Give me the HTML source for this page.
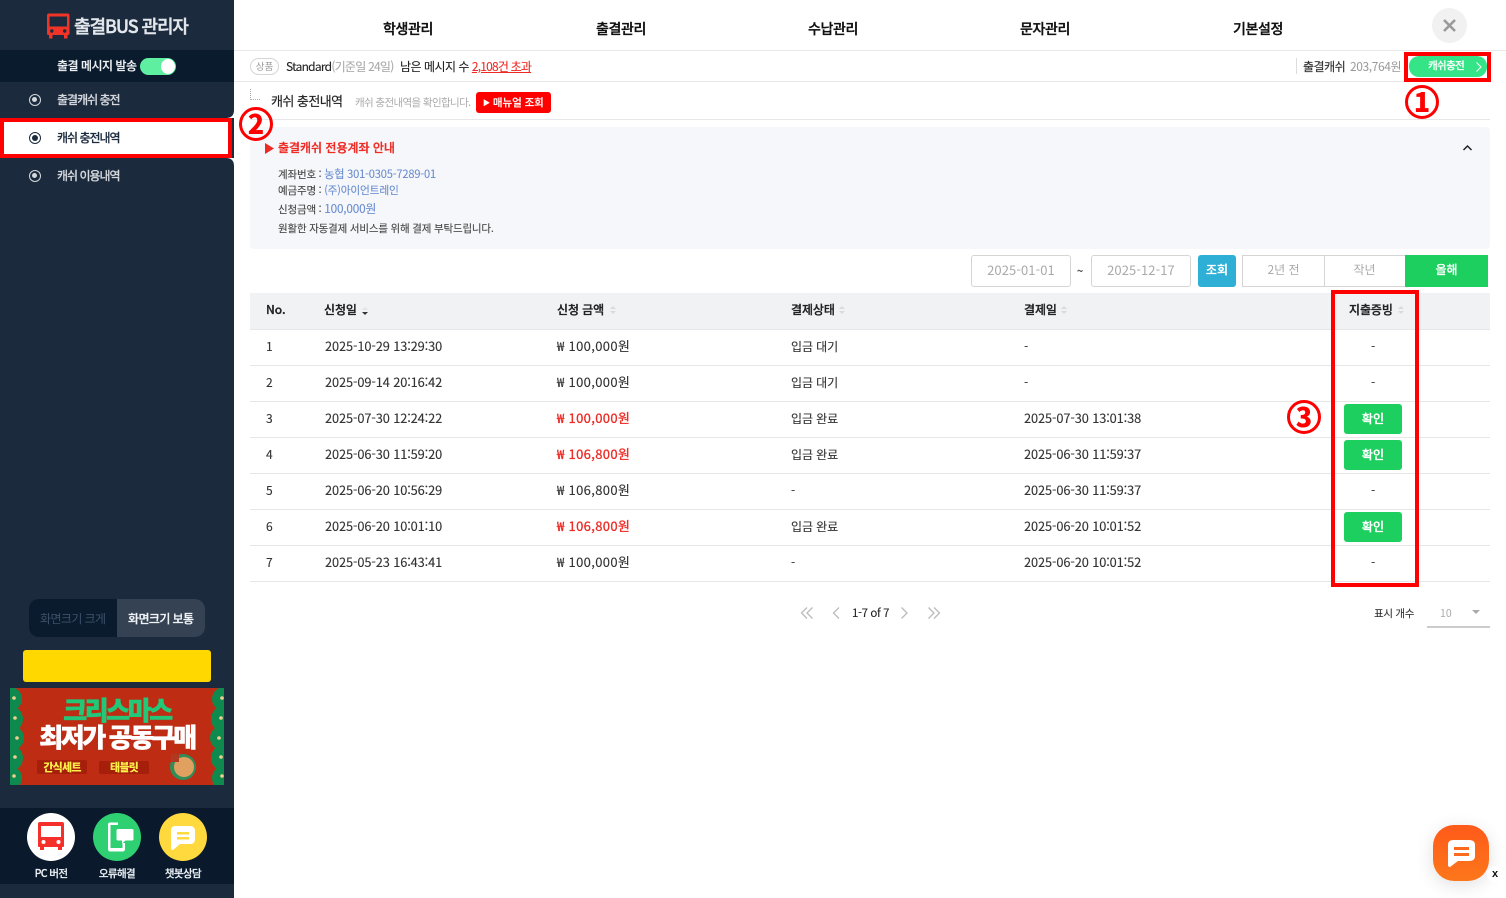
<!DOCTYPE html>
<html lang="ko"><head><meta charset="utf-8"><title>출결BUS 관리자</title>
<style>
*{box-sizing:border-box}
html,body{margin:0;padding:0;width:1506px;height:898px;overflow:hidden;background:#fff}
body{font-family:"Noto Sans CJK KR","Liberation Sans",sans-serif;color:#222;position:relative;font-feature-settings:"calt" 0;font-variant-ligatures:no-contextual}
.a,.t{position:absolute}
.t{white-space:nowrap;line-height:20px;height:20px}
.side{left:0;top:0;width:234px;height:898px;background:#1b2a3d}
.nav{font-size:14px;font-weight:500;color:#111;letter-spacing:-.35px;top:19px;transform:translateX(-50%);-webkit-text-stroke:.35px #111}
.radio{width:12px;height:12px;border-radius:50%;border:1.5px solid #d5d9de}
.radio:after{content:"";position:absolute;left:2px;top:2px;width:5px;height:5px;border-radius:50%;background:#d5d9de}
.m{font-size:12px;color:#d5d9de;letter-spacing:-1px;font-weight:500;-webkit-text-stroke:.15px}
.hl{position:absolute;left:250px;width:1240px;height:1px;background:#e6e7e9}
.th{font-size:12px;font-weight:500;color:#222;letter-spacing:-.1px;top:300px;-webkit-text-stroke:.3px #222}
.td{font-size:12px;color:#333;letter-spacing:-.1px;margin-top:1px;-webkit-text-stroke:.12px}
.d{font-size:12.800px;letter-spacing:-.1px;margin-top:0}
.w{font-size:13px;letter-spacing:.35px;margin-top:0}
.r{color:#ee2a24;font-weight:400;-webkit-text-stroke:.3px #ee2a24}
.btn{position:absolute;left:1344px;width:58px;height:30px;background:#1ccf5f;border-radius:3px;color:#fff;font-size:12px;font-weight:500;text-align:center;line-height:29px;letter-spacing:.1px;-webkit-text-stroke:.3px #fff}
.sort{position:absolute;width:6px;height:10px}
.num{position:absolute;width:34px;height:34px;border:3.500px solid #f00;border-radius:50%;color:#f00;font:900 27px/25px "Noto Sans CJK KR",sans-serif;text-align:center}
.date{position:absolute;top:255px;height:32px;width:100px;border:1px solid #d5d5d5;border-radius:3px;text-align:center;font-size:13px;color:#aaa;line-height:27px;letter-spacing:.1px}
.ic{font-size:10.500px;color:#eaf0f5;font-weight:500;letter-spacing:-.6px;transform:translateX(-50%);-webkit-text-stroke:.2px}
.n{font-size:10.500px;color:#444;letter-spacing:-.18px;-webkit-text-stroke:.1px}
</style></head><body>

<div class="a side"></div>
<svg class="a" style="left:46px;top:13px" width="24" height="26" viewBox="0 0 24 26"><path d="M1 2.500Q1 0.500 3 0.500H21.500Q23.500 0.500 23.500 2.500V20.500Q23.500 22 22 22H2.500Q1 22 1 20.500Z" fill="#f03528"/><rect x="3.500" y="3.500" width="17.500" height="10" fill="#1b2a3d"/><circle cx="5.800" cy="18" r="1.700" fill="#1b2a3d"/><circle cx="18.700" cy="18" r="1.700" fill="#1b2a3d"/><rect x="3" y="21" width="3.500" height="4.500" fill="#f03528"/><rect x="18" y="21" width="3.500" height="4.500" fill="#f03528"/></svg>
<div class="t" style="left:74px;top:16px;font-size:18px;font-weight:500;color:#e4e8ec;letter-spacing:-1.1px;-webkit-text-stroke:.4px #e4e8ec">출결BUS 관리자</div>

<div class="a" style="left:0;top:50px;width:234px;height:32px;background:#0b1b2e"></div>
<div class="t" style="left:57px;top:56px;font-size:12px;font-weight:500;color:#eef1f3;letter-spacing:-.5px;-webkit-text-stroke:.15px">출결 메시지 발송</div>
<div class="a" style="left:140px;top:58px;width:36px;height:17px;border-radius:9px;background:#5ef0a0"></div>
<div class="a" style="left:161px;top:59px;width:14px;height:15px;border-radius:50%;background:#fff"></div>

<div class="a radio" style="left:29px;top:94px"></div>
<div class="t m" style="left:57px;top:90px">출결캐쉬 충전</div>

<svg class="a" style="left:226px;top:110px" width="8" height="56" viewBox="0 0 8 56"><path d="M8 0V8H0Q8 8 8 0Z" fill="#fff"/><path d="M8 56V48H0Q8 48 8 56Z" fill="#fff"/></svg>
<div class="a" style="left:0;top:118px;width:232px;height:40px;background:#fff;border:4px solid #f00"></div>
<div class="a radio" style="left:29px;top:132px;border-color:#1b2a3d"></div>
<div class="a" style="left:32px;top:135px;width:6px;height:6px;border-radius:50%;background:#1b2a3d"></div>
<div class="t m" style="left:57px;top:128px;color:#1b2a3d">캐쉬 충전내역</div>

<div class="a radio" style="left:29px;top:170px"></div>
<div class="t m" style="left:57px;top:166px">캐쉬 이용내역</div>

<div class="a" style="left:29px;top:599px;width:176px;height:38px;border-radius:10px;background:#0b1b2e;overflow:hidden"><div class="a" style="left:88px;top:0;width:88px;height:38px;background:#344253"></div></div>
<div class="t" style="left:40px;top:609px;font-size:12px;color:#3d5069;letter-spacing:-.6px">화면크기 크게</div>
<div class="t" style="left:128px;top:609px;font-size:12px;color:#f0f2f4;font-weight:500;letter-spacing:-.6px;-webkit-text-stroke:.25px">화면크기 보통</div>
<div class="a" style="left:23px;top:650px;width:188px;height:32px;background:#ffd800;border-radius:3px"></div>

<div class="a" style="left:10px;top:688px;width:214px;height:97px;background:#be2c14;overflow:hidden">
<svg class="a" style="left:0;top:0" width="214" height="97" viewBox="0 0 214 97"><g fill="#0f8a4f"><rect width="4" height="97"/><rect x="210" width="4" height="97"/><circle cx="0" cy="11" r="12"/><circle cx="0" cy="31" r="13"/><circle cx="2" cy="50" r="12"/><circle cx="0" cy="70" r="13"/><circle cx="0" cy="90" r="12"/><circle cx="214" cy="11" r="12"/><circle cx="214" cy="31" r="13"/><circle cx="212" cy="50" r="12"/><circle cx="214" cy="70" r="13"/><circle cx="214" cy="90" r="12"/></g><g fill="#efcf8f"><circle cx="4" cy="10" r="1.800"/><circle cx="5" cy="30" r="1.800"/><circle cx="7" cy="50" r="1.800"/><circle cx="5" cy="69" r="1.800"/><circle cx="4" cy="88" r="1.800"/><circle cx="212" cy="10" r="1.800"/><circle cx="211" cy="30" r="1.800"/><circle cx="209" cy="50" r="1.800"/><circle cx="211" cy="69" r="1.800"/><circle cx="212" cy="88" r="1.800"/></g><circle cx="173" cy="79" r="13" fill="#2f8d58"/><circle cx="174" cy="79" r="10" fill="#e0a060"/><rect x="161" y="66" width="8" height="8" fill="#b03a20"/></svg>
<div class="t" style="left:0;width:214px;text-align:center;top:7px;height:30px;line-height:30px;font-size:26px;font-weight:900;color:#22c878;letter-spacing:-2.400px;-webkit-text-stroke:.5px #22c878">크리스마스</div>
<div class="t" style="left:0;width:214px;text-align:center;top:34px;height:30px;line-height:30px;font-size:26px;font-weight:900;color:#fff;letter-spacing:-2.400px;-webkit-text-stroke:.5px #fff">최저가 공동구매</div>
<div class="a" style="left:27px;top:72px;width:50px;height:14px;background:#a51f0b;border-radius:2px"></div>
<div class="a" style="left:89px;top:73px;width:50px;height:13px;background:#a51f0b;border-radius:2px"></div>
<div class="t" style="left:27px;width:50px;text-align:center;top:69px;font-size:11px;font-weight:900;color:#fff04a;letter-spacing:-.8px">간식세트</div>
<div class="t" style="left:89px;width:50px;text-align:center;top:69px;font-size:11px;font-weight:900;color:#fff04a;letter-spacing:-.8px">태블릿</div>
</div>

<div class="a" style="left:0;top:808px;width:234px;height:76px;background:#0a1a2c"></div>
<div class="a" style="left:27px;top:813px;width:48px;height:48px;border-radius:50%;background:#fff"></div>
<svg class="a" style="left:37px;top:821px" width="28" height="30" viewBox="0 0 28 30"><path d="M1 3Q1 1 3 1H25Q27 1 27 3V25Q27 26 26 26H2Q1 26 1 25Z" fill="#f5302a"/><rect x="4" y="5" width="20" height="11" fill="#fff"/><circle cx="6.500" cy="21" r="2" fill="#fff"/><circle cx="21.500" cy="21" r="2" fill="#fff"/><rect x="3" y="25" width="4" height="4" fill="#f5302a"/><rect x="21" y="25" width="4" height="4" fill="#f5302a"/></svg>
<div class="a" style="left:93px;top:813px;width:48px;height:48px;border-radius:50%;background:#2fd072"></div>
<svg class="a" style="left:107px;top:822px" width="27" height="30" viewBox="0 0 27 30"><path d="M11 0.500H3Q1 0.500 1 2.500V27Q1 29.500 3 29.500H15.500Q18 29.500 18 27V21H15.500V26H3.500V3H11Z" fill="#fff"/><path d="M9.500 8.500Q9.500 7 11 7H25Q26.500 7 26.500 8.500V17Q26.500 18.500 25 18.500H18.500L15 21.500V18.500H11Q9.500 18.500 9.500 17Z" fill="#fff"/></svg>
<div class="a" style="left:159px;top:813px;width:48px;height:48px;border-radius:50%;background:#ffd93d"></div>
<svg class="a" style="left:170px;top:825px" width="26" height="26" viewBox="0 0 26 26"><path d="M5 1H20Q25 1 25 6V14Q25 19 20 19H10L3 25Q1 25 1 23V6Q1 1 5 1Z" fill="#fff"/><rect x="7" y="7" width="12" height="2.500" fill="#ffd93d"/><rect x="7" y="12" width="12" height="2.500" fill="#ffd93d"/></svg>
<div class="t ic" style="left:51px;top:864px">PC 버전</div>
<div class="t ic" style="left:117px;top:864px">오류해결</div>
<div class="t ic" style="left:183px;top:864px">챗봇상담</div>

<!-- top nav -->
<div class="t nav" style="left:408px">학생관리</div>
<div class="t nav" style="left:621px">출결관리</div>
<div class="t nav" style="left:833px">수납관리</div>
<div class="t nav" style="left:1045px">문자관리</div>
<div class="t nav" style="left:1258px">기본설정</div>
<div class="a" style="left:1432px;top:8px;width:35px;height:35px;border-radius:50%;background:#f1f1f1"></div>
<svg class="a" style="left:1442px;top:18px" width="15" height="15" viewBox="0 0 15 15"><path d="M2 2L13 13M13 2L2 13" stroke="#999" stroke-width="2.600" fill="none"/></svg>
<div class="a" style="left:234px;top:50px;width:1272px;height:1px;background:#e8e8e8"></div>

<!-- info bar -->
<div class="a" style="left:250px;top:58px;width:29px;height:17px;border:1px solid #d5d5d5;border-radius:9px;font-size:9.500px;color:#999;text-align:center;line-height:14px">상품</div>
<div class="t" style="left:286px;top:57px;font-size:12px;color:#222;letter-spacing:-.75px;-webkit-text-stroke:.1px">Standard<span style="color:#aaa">(기준일 24일)</span></div>
<div class="t" style="left:400px;top:57px;font-size:12px;color:#222;letter-spacing:-.5px;-webkit-text-stroke:.1px">남은 메시지 수 <span style="color:#ee2a24;text-decoration:underline;letter-spacing:-.8px">2,108건 초과</span></div>
<div class="a" style="left:1296px;top:58px;width:1px;height:16px;background:#ddd"></div>
<div class="t" style="left:1303px;top:57px;font-size:12px;color:#333;letter-spacing:-.5px;-webkit-text-stroke:.15px">출결캐쉬 <span style="color:#999;letter-spacing:-.4px;margin-left:2px;-webkit-text-stroke:0">203,764원</span></div>
<div class="a" style="left:1409px;top:56px;width:78px;height:21px;border-radius:10px;background:#35e486"></div>
<div class="t" style="left:1428px;top:56px;font-size:10.500px;color:#fff;font-weight:500;letter-spacing:-.6px;-webkit-text-stroke:.15px">캐쉬충전</div>
<svg class="a" style="left:1475px;top:61px" width="8" height="12" viewBox="0 0 8 12"><path d="M1.500 1.500L6 6L1.500 10.500" stroke="#fff" fill="none" stroke-width="1"/></svg>
<div class="a" style="left:1404px;top:52px;width:87px;height:30px;border:4px solid #f00"></div>
<div class="a" style="left:234px;top:81px;width:1170px;height:1px;background:#e8e8e8"></div>

<!-- page title -->
<div class="a" style="left:250px;top:89px;width:10px;height:11px;border-left:1px dotted #aaa;border-bottom:1px dotted #aaa"></div>
<div class="t" style="left:271px;top:91px;font-size:13px;color:#222;letter-spacing:-.55px;-webkit-text-stroke:.15px">캐쉬 충전내역</div>
<div class="t" style="left:355px;top:93px;font-size:10.500px;color:#aaa;letter-spacing:-.62px">캐쉬 충전내역을 확인합니다.</div>
<div class="a" style="left:476px;top:92px;width:75px;height:21px;background:#f00;border-radius:3px"></div>
<div class="t" style="left:483px;top:93px;font-size:10.500px;color:#fff;font-weight:500;letter-spacing:-.05px;-webkit-text-stroke:.15px"><span style="font-size:7px;position:relative;top:-1px">▶</span> 매뉴얼 조회</div>
<div class="hl" style="top:119px"></div>

<!-- notice -->
<div class="a" style="left:250px;top:127px;width:1240px;height:122px;background:#f6f7fa;border-radius:4px"></div>
<svg class="a" style="left:265px;top:143px" width="9" height="11" viewBox="0 0 9 11"><path d="M0 0L9 5.500L0 11Z" fill="#ee2a24"/></svg>
<div class="t" style="left:278px;top:138px;font-size:12px;font-weight:500;color:#ee2a24;letter-spacing:-.02px;-webkit-text-stroke:.3px #ee2a24">출결캐쉬 전용계좌 안내</div>
<svg class="a" style="left:1462px;top:144px" width="11" height="8" viewBox="0 0 11 8"><path d="M1.500 6L5.500 2L9.500 6" stroke="#222" stroke-width="1.500" fill="none"/></svg>
<div class="t n" style="left:278px;top:164px">계좌번호 : <span style="color:#6a8dd0;font-size:11.100px">농협 301-0305-7289-01</span></div>
<div class="t n" style="left:278px;top:181px">예금주명 : <span style="color:#6a8dd0;font-size:10.700px">(주)아이언트레인</span></div>
<div class="t n" style="left:278px;top:199px">신청금액 : <span style="color:#6a8dd0;font-size:11.800px">100,000원</span></div>
<div class="t n" style="left:278px;top:219px">원활한 자동결제 서비스를 위해 결제 부탁드립니다.</div>

<!-- filters -->
<div class="date" style="left:971px">2025-01-01</div>
<div class="t" style="left:1077px;top:261px;font-size:11px;color:#444;-webkit-text-stroke:.3px">~</div>
<div class="date" style="left:1091px">2025-12-17</div>
<div class="a" style="left:1198px;top:255px;width:38px;height:32px;background:#2eafd6;border-radius:3px;color:#fff;font-size:12px;font-weight:500;text-align:center;line-height:29px;letter-spacing:.1px;-webkit-text-stroke:.3px #fff">조회</div>
<div class="a" style="left:1242px;top:255px;width:83px;height:32px;border:1px solid #d5d5d5;text-align:center;font-size:12px;color:#aaa;line-height:28px">2년 전</div>
<div class="a" style="left:1324px;top:255px;width:82px;height:32px;border:1px solid #d5d5d5;border-left:0;text-align:center;font-size:12px;color:#aaa;line-height:28px">작년</div>
<div class="a" style="left:1405px;top:255px;width:83px;height:32px;background:#1ccf5f;text-align:center;font-size:12px;color:#fff;font-weight:500;line-height:29px;-webkit-text-stroke:.2px #fff">올해</div>

<!-- table -->
<div class="a" style="left:250px;top:293px;width:1240px;height:36px;background:#f1f2f4"></div>
<div class="hl" style="top:329px"></div><div class="hl" style="top:365px"></div><div class="hl" style="top:401px"></div><div class="hl" style="top:437px"></div><div class="hl" style="top:473px"></div><div class="hl" style="top:509px"></div><div class="hl" style="top:545px"></div><div class="hl" style="top:581px"></div>

<div class="t th" style="left:266px">No.</div>
<div class="t th" style="left:324px">신청일</div>
<svg class="sort" style="left:362px;top:306px" viewBox="0 0 6 10"><path d="M0 4L3 1L6 4Z" fill="#e3e3e3"/><path d="M0 6H6L3 9Z" fill="#333"/></svg>
<div class="t th" style="left:557px">신청 금액</div>
<svg class="sort" style="left:610px;top:305px" viewBox="0 0 6 10"><path d="M0 4L3 1L6 4ZM0 6H6L3 9Z" fill="#d8dadd"/></svg>
<div class="t th" style="left:791px">결제상태</div>
<svg class="sort" style="left:839px;top:305px" viewBox="0 0 6 10"><path d="M0 4L3 1L6 4ZM0 6H6L3 9Z" fill="#d8dadd"/></svg>
<div class="t th" style="left:1024px">결제일</div>
<svg class="sort" style="left:1061px;top:305px" viewBox="0 0 6 10"><path d="M0 4L3 1L6 4ZM0 6H6L3 9Z" fill="#d8dadd"/></svg>
<div class="t th" style="left:1349px">지출증빙</div>
<svg class="sort" style="left:1398px;top:305px" viewBox="0 0 6 10"><path d="M0 4L3 1L6 4ZM0 6H6L3 9Z" fill="#d8dadd"/></svg>

<div class="t td" style="left:266px;top:336px">1</div><div class="t td d" style="left:325px;top:336px">2025-10-29 13:29:30</div><div class="t td w" style="left:557px;top:336px">₩ 100,000원</div><div class="t td" style="left:791px;top:336px">입금 대기</div><div class="t td" style="left:1024px;top:336px">-</div><div class="t td" style="left:1371px;top:336px">-</div>
<div class="t td" style="left:266px;top:372px">2</div><div class="t td d" style="left:325px;top:372px">2025-09-14 20:16:42</div><div class="t td w" style="left:557px;top:372px">₩ 100,000원</div><div class="t td" style="left:791px;top:372px">입금 대기</div><div class="t td" style="left:1024px;top:372px">-</div><div class="t td" style="left:1371px;top:372px">-</div>
<div class="t td" style="left:266px;top:408px">3</div><div class="t td d" style="left:325px;top:408px">2025-07-30 12:24:22</div><div class="t td w r" style="left:557px;top:408px">₩ 100,000원</div><div class="t td" style="left:791px;top:408px">입금 완료</div><div class="t td d" style="left:1024px;top:408px">2025-07-30 13:01:38</div><div class="btn" style="top:404px">확인</div>
<div class="t td" style="left:266px;top:444px">4</div><div class="t td d" style="left:325px;top:444px">2025-06-30 11:59:20</div><div class="t td w r" style="left:557px;top:444px">₩ 106,800원</div><div class="t td" style="left:791px;top:444px">입금 완료</div><div class="t td d" style="left:1024px;top:444px">2025-06-30 11:59:37</div><div class="btn" style="top:440px">확인</div>
<div class="t td" style="left:266px;top:480px">5</div><div class="t td d" style="left:325px;top:480px">2025-06-20 10:56:29</div><div class="t td w" style="left:557px;top:480px">₩ 106,800원</div><div class="t td" style="left:791px;top:480px">-</div><div class="t td d" style="left:1024px;top:480px">2025-06-30 11:59:37</div><div class="t td" style="left:1371px;top:480px">-</div>
<div class="t td" style="left:266px;top:516px">6</div><div class="t td d" style="left:325px;top:516px">2025-06-20 10:01:10</div><div class="t td w r" style="left:557px;top:516px">₩ 106,800원</div><div class="t td" style="left:791px;top:516px">입금 완료</div><div class="t td d" style="left:1024px;top:516px">2025-06-20 10:01:52</div><div class="btn" style="top:512px">확인</div>
<div class="t td" style="left:266px;top:552px">7</div><div class="t td d" style="left:325px;top:552px">2025-05-23 16:43:41</div><div class="t td w" style="left:557px;top:552px">₩ 100,000원</div><div class="t td" style="left:791px;top:552px">-</div><div class="t td d" style="left:1024px;top:552px">2025-06-20 10:01:52</div><div class="t td" style="left:1371px;top:552px">-</div>

<div class="a" style="left:1331px;top:290px;width:88px;height:297px;border:4px solid #f00"></div>

<!-- annotation circles -->
<div class="num" style="left:1405px;top:85px">1</div>
<div class="num" style="left:239px;top:107px">2</div>
<div class="num" style="left:1287px;top:400px">3</div>

<!-- pagination -->
<svg class="a" style="left:800px;top:606px" width="14" height="14" viewBox="0 0 14 14"><path d="M7 1.500L1.500 7L7 12.500M12.500 1.500L7 7L12.500 12.500" stroke="#bbb" stroke-width="1.300" fill="none"/></svg>
<svg class="a" style="left:832px;top:606px" width="9" height="14" viewBox="0 0 9 14"><path d="M7 1.500L1.500 7L7 12.500" stroke="#bbb" stroke-width="1.300" fill="none"/></svg>
<div class="t" style="left:852px;top:603px;font-size:11.500px;color:#222;letter-spacing:-.4px;-webkit-text-stroke:.1px">1-7 of 7</div>
<svg class="a" style="left:900px;top:606px" width="9" height="14" viewBox="0 0 9 14"><path d="M1.500 1.500L7 7L1.500 12.500" stroke="#bbb" stroke-width="1.300" fill="none"/></svg>
<svg class="a" style="left:927px;top:606px" width="14" height="14" viewBox="0 0 14 14"><path d="M1.500 1.500L7 7L1.500 12.500M7 1.500L12.500 7L7 12.500" stroke="#bbb" stroke-width="1.300" fill="none"/></svg>
<div class="t" style="left:1374px;top:604px;font-size:10.500px;color:#333;letter-spacing:-.3px;-webkit-text-stroke:.1px">표시 개수</div>
<div class="t" style="left:1440px;top:604px;font-size:10.500px;color:#aaa">10</div>
<svg class="a" style="left:1472px;top:610px" width="8" height="5" viewBox="0 0 8 5"><path d="M0 0H8L4 4Z" fill="#aaa"/></svg>
<div class="a" style="left:1427px;top:626px;width:63px;height:2px;background:#ccc"></div>

<!-- floating chat -->
<div class="a" style="left:1433px;top:825px;width:56px;height:56px;border-radius:21px;background:linear-gradient(#fe5a1a,#fd771b);box-shadow:0 4px 18px rgba(0,0,0,.12)"></div>
<svg class="a" style="left:1447px;top:839px" width="28" height="29" viewBox="0 0 28 29"><path d="M6 1H22Q28 1 28 6V17Q28 22 22 22H11L3 28Q1 28 1 26V6Q1 1 6 1Z" fill="#fff"/><rect x="7" y="8" width="15" height="3" fill="#fe6a1b"/><rect x="7" y="14" width="15" height="3" fill="#fe6a1b"/></svg>
<div class="a" style="left:1487px;top:866px;width:16px;height:16px;border-radius:50%;background:#fff;font:700 11px/16px 'Liberation Sans',sans-serif;text-align:center;color:#111">x</div>

</body></html>
